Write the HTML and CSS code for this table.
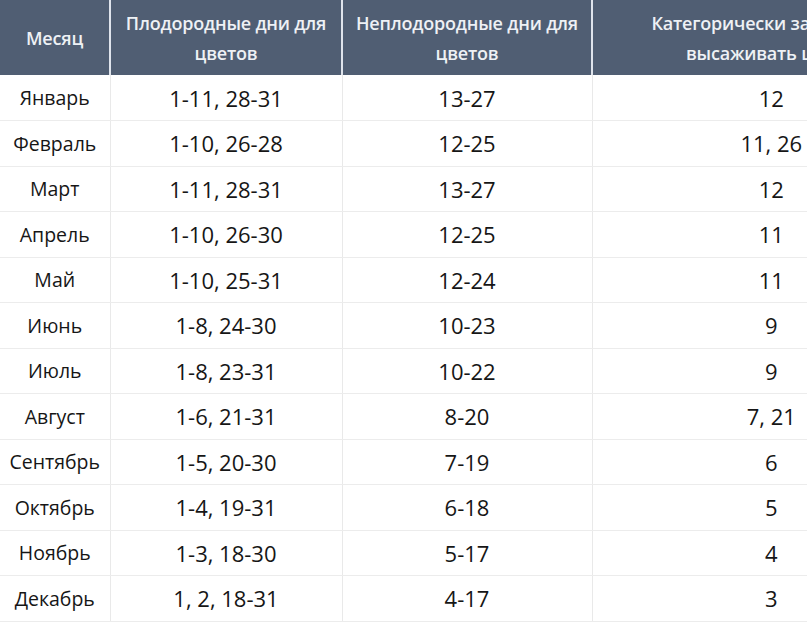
FILE: index.html
```html
<!DOCTYPE html>
<html lang="ru">
<head>
<meta charset="utf-8">
<link rel="stylesheet" href="styles.css">
</head>
<body>
<div class="wrap">
<table class="cal">
<colgroup>
<col class="c1"><col class="c2"><col class="c3"><col class="c4">
</colgroup>
<thead>
<tr>
<th>Месяц</th>
<th>Плодородные дни для цветов</th>
<th>Неплодородные дни для цветов</th>
<th>Категорически запрещено<br>высаживать цветы</th>
</tr>
</thead>
<tbody>
<tr><td class="m">Январь</td><td>1-11, 28-31</td><td>13-27</td><td>12</td></tr>
<tr><td class="m">Февраль</td><td>1-10, 26-28</td><td>12-25</td><td>11, 26</td></tr>
<tr><td class="m">Март</td><td>1-11, 28-31</td><td>13-27</td><td>12</td></tr>
<tr><td class="m">Апрель</td><td>1-10, 26-30</td><td>12-25</td><td>11</td></tr>
<tr><td class="m">Май</td><td>1-10, 25-31</td><td>12-24</td><td>11</td></tr>
<tr><td class="m">Июнь</td><td>1-8, 24-30</td><td>10-23</td><td>9</td></tr>
<tr><td class="m">Июль</td><td>1-8, 23-31</td><td>10-22</td><td>9</td></tr>
<tr><td class="m">Август</td><td>1-6, 21-31</td><td>8-20</td><td>7, 21</td></tr>
<tr><td class="m">Сентябрь</td><td>1-5, 20-30</td><td>7-19</td><td>6</td></tr>
<tr><td class="m">Октябрь</td><td>1-4, 19-31</td><td>6-18</td><td>5</td></tr>
<tr><td class="m">Ноябрь</td><td>1-3, 18-30</td><td>5-17</td><td>4</td></tr>
<tr><td class="m">Декабрь</td><td>1, 2, 18-31</td><td>4-17</td><td>3</td></tr>
</tbody>
</table>
</div>
</body>
</html>
```
FILE: styles.css
```css
html, body {
  margin: 0;
  padding: 0;
  background: #ffffff;
}
.wrap {
  width: 807px;
  height: 625px;
  overflow: hidden;
}
.cal {
  width: 950px;
  table-layout: fixed;
  border-collapse: collapse;
  font-family: "Open Sans", "Noto Sans", sans-serif;
  color: #161616;
}
.c1 { width: 110px; }
.c2 { width: 232px; }
.c3 { width: 250px; }
.c4 { width: 358px; }
.cal th {
  height: 75px;
  padding: 0 6px;
  box-sizing: border-box;
  background: #505e73;
  color: #eef1f5;
  font-size: 18px;
  font-weight: 600;
  line-height: 30px;
  letter-spacing: -0.2px;
  text-align: center;
  vertical-align: middle;
  border-left: 2px solid #dfe4ec;
  white-space: normal;
}
.cal th:first-child {
  border-left: none;
}
.cal td {
  height: 45.5px;
  padding: 0;
  box-sizing: border-box;
  font-size: 22px;
  font-weight: 500;
  text-align: center;
  vertical-align: middle;
  border-left: 1px solid #e9e9e9;
  border-bottom: 1px solid #ececec;
}
.cal td:first-child {
  border-left: none;
}
.cal td.m {
  font-size: 19.5px;
}
```
